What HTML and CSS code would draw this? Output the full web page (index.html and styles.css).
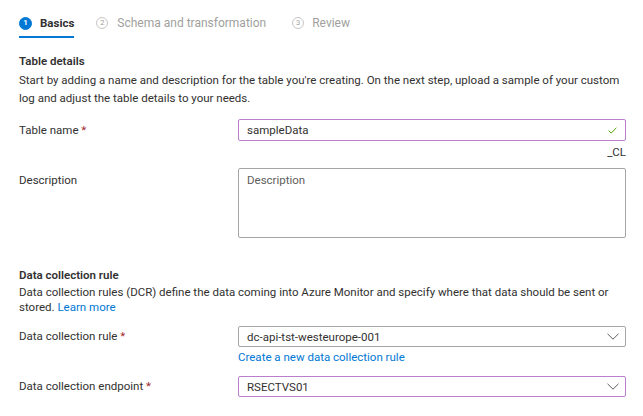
FILE: index.html
```html
<!DOCTYPE html>
<html lang="en">
<head>
<meta charset="utf-8">
<title>Create table - Basics</title>
<link rel="stylesheet" href="styles.css">
</head>
<body>
<div class="page">
  <nav class="tabs">
    <div class="tab active"><span class="num">1</span><span class="tab-label">Basics</span></div>
    <div class="tab tab-2"><span class="num">2</span><span class="tab-label">Schema and transformation</span></div>
    <div class="tab"><span class="num">3</span><span class="tab-label">Review</span></div>
  </nav>

  <h2 class="section-title first">Table details</h2>
  <p class="section-text">Start by adding a name and description for the table you're creating. On the next step, upload a sample of your custom log and adjust the table details to your needs.</p>

  <div class="row row-name">
    <label class="label">Table name <span class="req">*</span></label>
    <div class="control">
      <div class="field valid">
        <span class="value">sampleData</span>
        <svg class="check" width="9" height="7" viewBox="0 0 9 7"><path d="M0.6 3.6 L3.2 6.1 L8.4 0.7" fill="none" stroke="#57a300" stroke-width="1"/></svg>
      </div>
      <div class="suffix">_CL</div>
    </div>
  </div>

  <div class="row row-desc">
    <label class="label label-desc">Description</label>
    <div class="control">
      <div class="textarea"><span class="placeholder">Description</span></div>
    </div>
  </div>

  <h2 class="section-title second">Data collection rule</h2>
  <div class="section-text tight">
    <div class="line">Data collection rules (DCR) define the data coming into Azure Monitor and specify where that data should be sent or</div>
    <div class="line"><span>stored.</span> <a class="link" href="#">Learn more</a></div>
  </div>

  <div class="row row-dcr">
    <label class="label">Data collection rule <span class="req">*</span></label>
    <div class="control">
      <div class="field select">
        <span class="value">dc-api-tst-westeurope-001</span>
        <svg class="chev" width="12" height="7" viewBox="0 0 12 7"><path d="M0.5 0.8 L6 6.2 L11.5 0.8" fill="none" stroke="#605e5c" stroke-width="1"/></svg>
      </div>
      <a class="link create" href="#">Create a new data collection rule</a>
    </div>
  </div>

  <div class="row row-dce">
    <label class="label">Data collection endpoint <span class="req">*</span></label>
    <div class="control">
      <div class="field select focus">
        <span class="value">RSECTVS01</span>
        <svg class="chev" width="12" height="7" viewBox="0 0 12 7"><path d="M0.5 0.8 L6 6.2 L11.5 0.8" fill="none" stroke="#605e5c" stroke-width="1"/></svg>
      </div>
    </div>
  </div>
</div>
</body>
</html>
```
FILE: styles.css
```css
* { box-sizing: border-box; }
html, body { margin: 0; padding: 0; background: #ffffff; }
body {
  font-family: Roboto, "Liberation Sans", sans-serif;
  font-size: 11.5px;
  color: #323130;
}
.page { padding-left: 19px; width: 643px; }

/* tabs */
.tabs { display: flex; align-items: flex-start; }
.tab {
  display: flex;
  align-items: center;
  gap: 8px;
  padding-top: 16px;
  padding-bottom: 6px;
  line-height: 14px;
  font-size: 12px;
  color: #a19f9d;
  border-bottom: 2px solid transparent;
  margin-right: 22px;
}
.tab-2 { margin-right: 26px; gap: 9px; }
.tab.active { color: #323130; border-bottom-color: #0078d4; }
.tab.active .tab-label { font-weight: 700; font-size: 11.5px; }
.num {
  width: 12px; height: 12px;
  border-radius: 50%;
  border: 1px solid #c8c6c4;
  display: inline-flex; align-items: center; justify-content: center;
  font-size: 7.5px; line-height: 1; font-weight: 400;
  color: #a19f9d;
}
.tab.active .num { width: 13px; height: 13px; background: #0078d4; border-color: #0078d4; color: #fff; font-weight: 700; font-size: 8px; }

/* sections */
.section-title { margin: 0; font-size: 11.5px; font-weight: 600; line-height: 16px; color: #323130; }
.section-title.first { margin-top: 15px; }
.section-title.second { margin-top: 29px; }
.section-text { margin: 2px 0 0; line-height: 18px; width: 610px; }
.section-text.tight { line-height: 15px; margin-top: 2px; }
.link { color: #0078d4; text-decoration: none; }

/* form rows */
.row { display: grid; grid-template-columns: 219px 388px; align-items: start; }
.label { line-height: 22px; }
.req { color: #a4262c; }
.row-name { margin-top: 12px; }
.row-desc { margin-top: 9px; }
.label-desc { line-height: 16px; padding-top: 4px; }
.row-dcr { margin-top: 11px; }
.row-dce { margin-top: 12px; }
.row-dcr .label, .row-dce .label { line-height: 21px; }

.field {
  height: 22px;
  border: 1px solid #a6a6a6;
  border-radius: 2px;
  display: flex;
  align-items: center;
  justify-content: space-between;
  padding: 0 8px 0 8px;
}
.field.valid, .field.focus { border-color: #b97fcb; }
.field.select { height: 21px; padding-right: 6px; }
.value { color: #323130; }
.suffix { text-align: right; line-height: 14px; margin-top: 4px; }
.textarea {
  height: 70px;
  border: 1px solid #a6a6a6;
  border-radius: 2px;
  padding: 3px 8px;
  line-height: 16px;
}
.placeholder { color: #605e5c; }
.create { display: block; line-height: 14px; margin-top: 3px; }
```
